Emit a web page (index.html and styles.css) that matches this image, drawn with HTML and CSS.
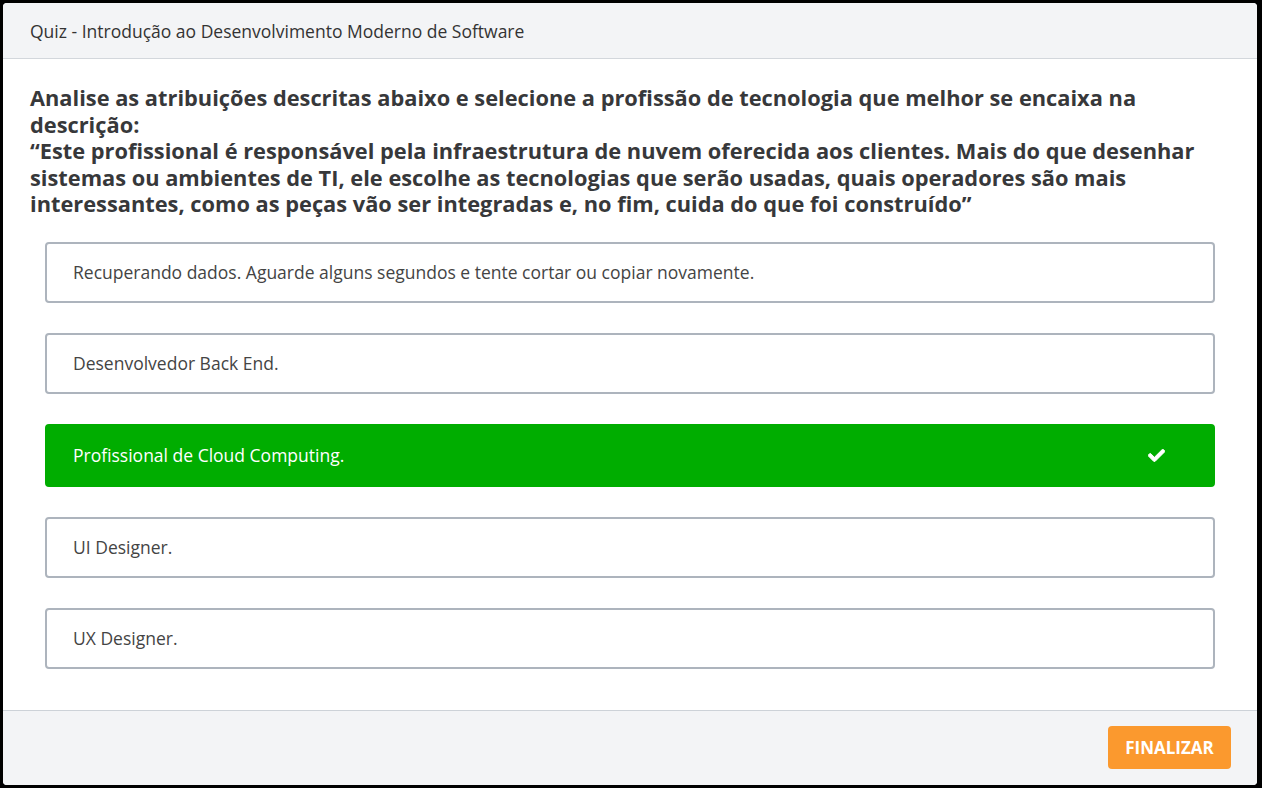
FILE: index.html
```html
<!DOCTYPE html>
<html lang="pt-BR">
<head>
<meta charset="utf-8">
<title>Quiz</title>
<link rel="stylesheet" href="styles.css">
</head>
<body>
<div class="modal">
  <header class="modal-header">Quiz - Introdução ao Desenvolvimento Moderno de Software</header>
  <main class="modal-body">
    <h2 class="question">Analise as atribuições descritas abaixo e selecione a profissão de tecnologia que melhor se encaixa na descrição:<br>“Este profissional é responsável pela infraestrutura de nuvem oferecida aos clientes. Mais do que desenhar sistemas ou ambientes de TI, ele escolhe as tecnologias que serão usadas, quais operadores são mais interessantes, como as peças vão ser integradas e, no fim, cuida do que foi construído”</h2>
    <ul class="options">
      <li class="option">Recuperando dados. Aguarde alguns segundos e tente cortar ou copiar novamente.</li>
      <li class="option">Desenvolvedor Back End.</li>
      <li class="option correct">Profissional de Cloud Computing.
        <svg class="check" viewBox="0 56 512 400" width="17" height="13"><path fill="#fff" stroke="#fff" stroke-width="30" stroke-linejoin="round" d="M173.9 439.4l-166.4-166.4c-10-10-10-26.2 0-36.2l36.2-36.2c10-10 26.2-10 36.2 0L192 312.7 432.1 72.6c10-10 26.2-10 36.2 0l36.2 36.2c10 10 10 26.2 0 36.2L210.1 439.4c-10 10-26.2 10-36.2 0z"/></svg>
      </li>
      <li class="option">UI Designer.</li>
      <li class="option">UX Designer.</li>
    </ul>
  </main>
  <footer class="modal-footer">
    <button class="btn-finish">FINALIZAR</button>
  </footer>
</div>
</body>
</html>
```

FILE: styles.css
```css
html, body {
  margin: 0;
  padding: 0;
  background: #000;
}
body {
  font-family: "Open Sans", "Noto Sans", sans-serif;
  color: #333;
}
.modal {
  margin: 3px 5px 0 3px;
  height: 782px;
  background: #fff;
  border-radius: 4px;
  display: flex;
  flex-direction: column;
  overflow: hidden;
}
.modal-header {
  height: 56px;
  box-sizing: border-box;
  background: #f3f4f6;
  border-bottom: 1px solid #d3d7dc;
  display: flex;
  align-items: center;
  padding: 0 27px;
  font-size: 17.5px;
  color: #333;
  flex: none;
}
.modal-body {
  flex: 1;
  padding: 26px 27px 0 27px;
}
.question {
  margin: 0;
  font-size: 21.8px;
  font-weight: 700;
  line-height: 26.5px;
  color: #37383a;
}
.options {
  list-style: none;
  margin: 24px 15px 0 15px;
  padding: 0;
  display: flex;
  flex-direction: column;
  gap: 30px;
}
.option {
  height: 61px;
  box-sizing: border-box;
  border: 2px solid #adb4bd;
  border-radius: 4px;
  display: flex;
  align-items: center;
  justify-content: space-between;
  padding: 0 48px 0 26px;
  font-size: 17.5px;
  color: #444;
}
.option.correct {
  height: 63px;
  background: #00ad00;
  border-color: #00ad00;
  color: #fff;
}
.check {
  display: block;
}
.modal-footer {
  flex: none;
  height: 75px;
  box-sizing: border-box;
  background: #f3f4f6;
  border-top: 1px solid #cdd2d8;
  display: flex;
  justify-content: flex-end;
  align-items: flex-start;
  padding: 15px 26px 0 0;
}
.btn-finish {
  height: 43px;
  width: 123px;
  border: none;
  border-radius: 4px;
  background: #fb992e;
  color: #fff;
  font-family: "Open Sans", "Noto Sans", sans-serif;
  font-weight: 700;
  font-size: 17px;
  padding: 0;
}
```
